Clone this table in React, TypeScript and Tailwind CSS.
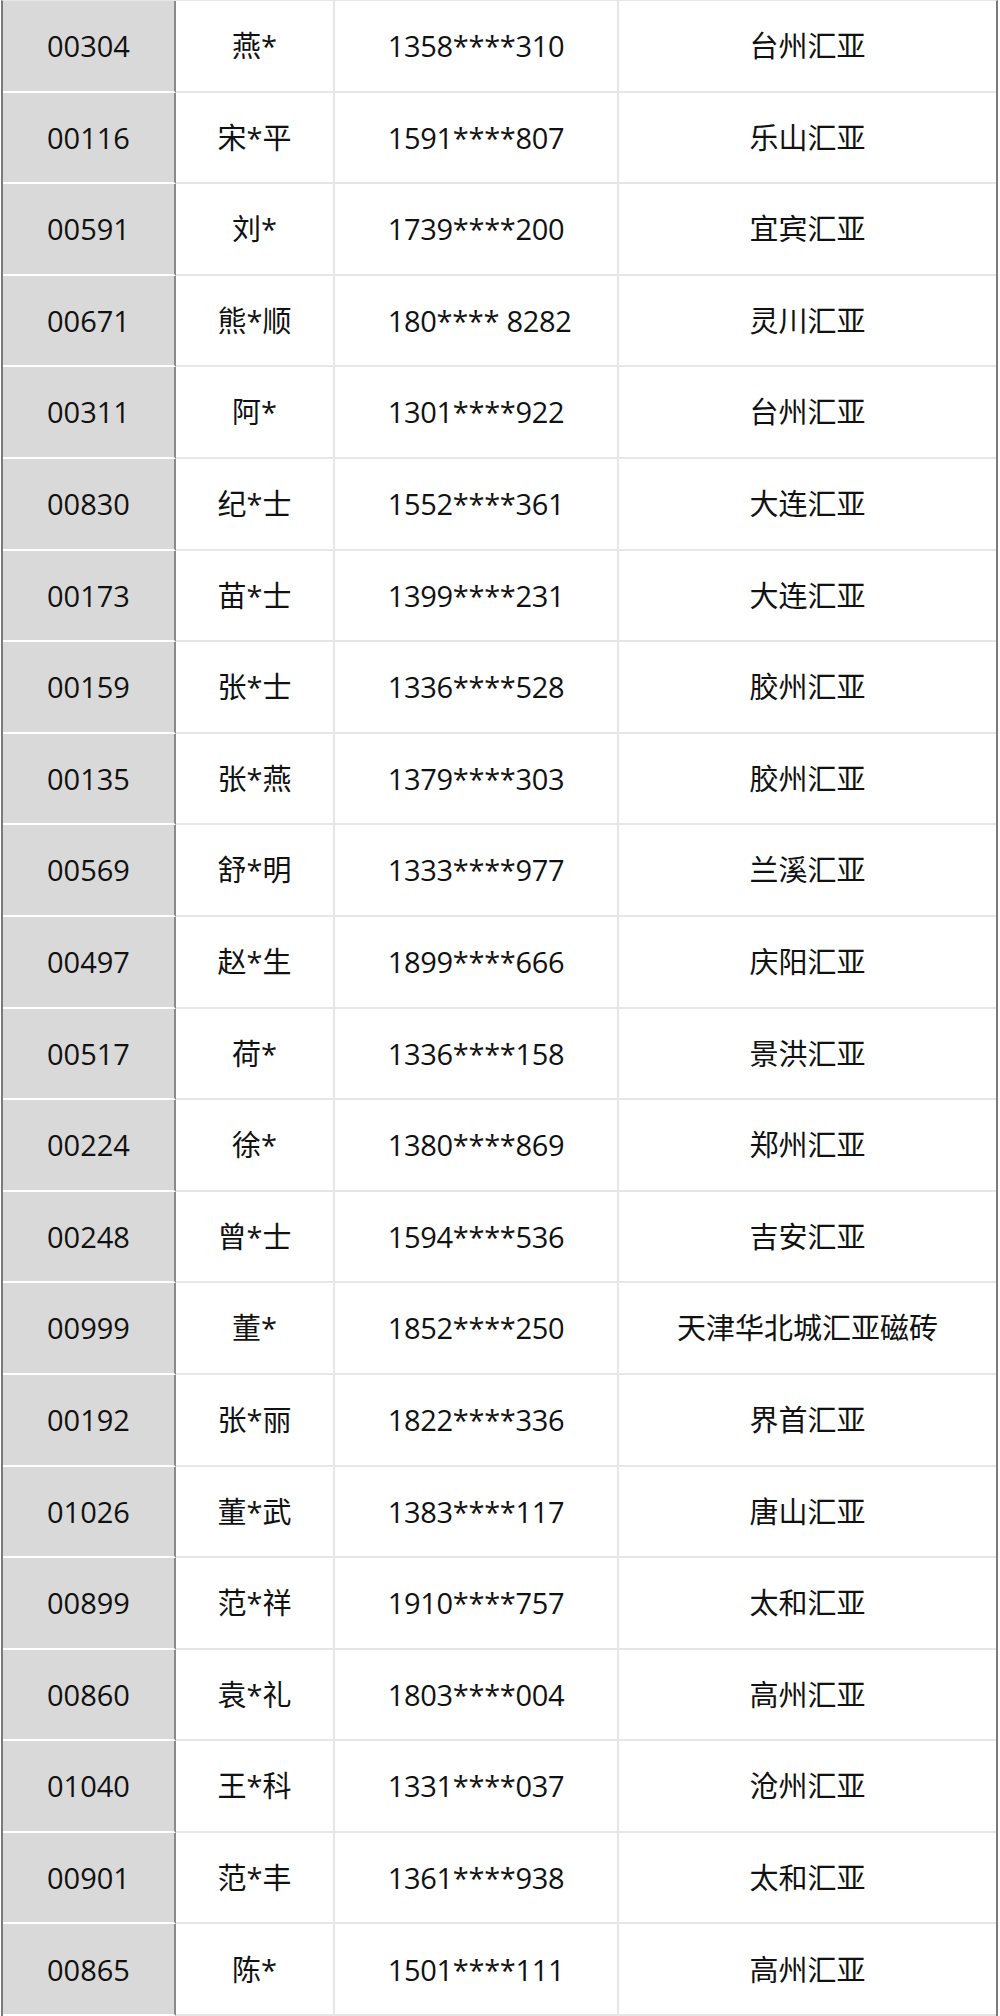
const ROWS: [string, string, string, string][] = [
  ["00304", "燕*", "1358****310", "台州汇亚"],
  ["00116", "宋*平", "1591****807", "乐山汇亚"],
  ["00591", "刘*", "1739****200", "宜宾汇亚"],
  ["00671", "熊*顺", " 180**** 8282", "灵川汇亚"],
  ["00311", "阿*", "1301****922", "台州汇亚"],
  ["00830", "纪*士", "1552****361", "大连汇亚"],
  ["00173", "苗*士", "1399****231", "大连汇亚"],
  ["00159", "张*士", "1336****528", "胶州汇亚"],
  ["00135", "张*燕", "1379****303", "胶州汇亚"],
  ["00569", "舒*明", "1333****977", "兰溪汇亚"],
  ["00497", "赵*生", "1899****666", "庆阳汇亚"],
  ["00517", "荷*", "1336****158", "景洪汇亚"],
  ["00224", "徐*", "1380****869", "郑州汇亚"],
  ["00248", "曾*士", "1594****536", "吉安汇亚"],
  ["00999", "董*", "1852****250", "天津华北城汇亚磁砖"],
  ["00192", "张*丽", "1822****336", "界首汇亚"],
  ["01026", "董*武", "1383****117", "唐山汇亚"],
  ["00899", "范*祥", "1910****757", "太和汇亚"],
  ["00860", "袁*礼", "1803****004", "高州汇亚"],
  ["01040", "王*科", "1331****037", "沧州汇亚"],
  ["00901", "范*丰", "1361****938", "太和汇亚"],
  ["00865", "陈*", "1501****111", "高州汇亚"],
];

export default function App() {
  return (
    <div
      className="flex h-[2016px] w-[1000px] bg-white pl-[1px] pr-[2px] text-[29px] text-[#111]"
      style={{ fontFamily: '"Open Sans", "Noto Sans CJK SC", sans-serif' }}
    >
      <div className="flex flex-1 flex-col border-x-2 border-x-[#7a7a7a] border-t border-t-[#e6e6e6]">
        {ROWS.map(([code, name, phone, shop]) => (
          <div key={code + phone} className="flex flex-1">
            <div className="flex w-[173px] items-center justify-center border-r-2 border-b-2 border-r-[#8a8a8a] border-b-white bg-[#d9d9d9]">
              {code}
            </div>
            <div className="flex w-[159px] items-center justify-center border-r-2 border-b-2 border-[#e6e6e6]">
              {name}
            </div>
            <div className="flex w-[284px] items-center justify-center whitespace-pre border-r-2 border-b-2 border-[#e6e6e6] tracking-[-0.3px]">
              {phone}
            </div>
            <div className="flex flex-1 items-center justify-center border-b-2 border-[#e6e6e6]">
              {shop}
            </div>
          </div>
        ))}
      </div>
    </div>
  );
}
